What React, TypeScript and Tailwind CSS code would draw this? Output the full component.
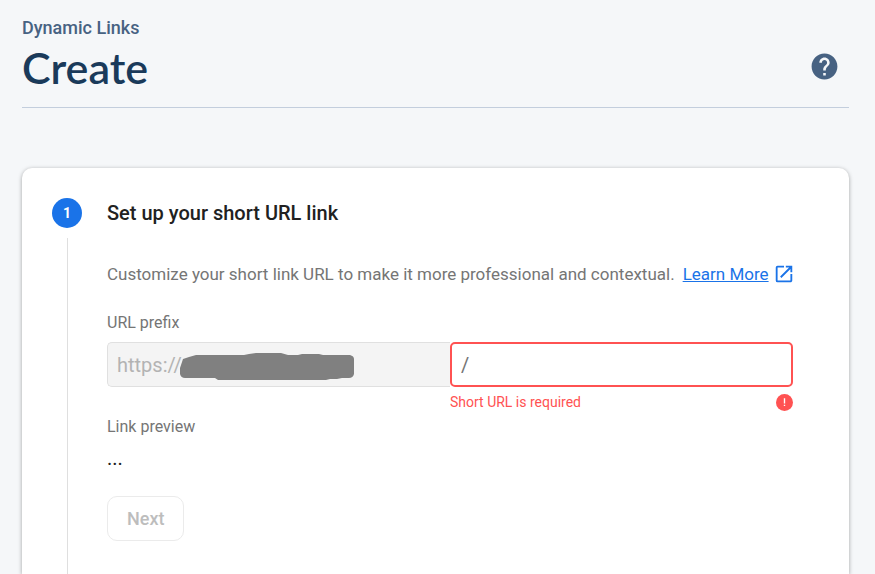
import { useState } from "react"

const HelpIcon = () => {
    return <svg className="w-[31px] h-[31px]" viewBox="0 0 24 24" fill="currentColor" aria-hidden="true">
        <path d="M12 2C6.48 2 2 6.48 2 12s4.48 10 10 10 10-4.480 10-10S17.520 2 12 2zm1 17h-2v-2h2v2zm2.070-7.750l-.9.920C13.450 12.900 13 13.500 13 15h-2v-.5c0-1.100.450-2.100 1.170-2.830l1.240-1.260c.370-.360.590-.860.590-1.410 0-1.100-.9-2-2-2s-2 .9-2 2H8c0-2.210 1.790-4 4-4s4 1.790 4 4c0 .880-.360 1.680-.930 2.250z" />
    </svg>
}

const OpenIcon = () => {
    return <svg className="w-[22px] h-[22px]" viewBox="0 0 24 24" fill="currentColor" aria-hidden="true">
        <path d="M19 19H5V5h7V3H5a2 2 0 0 0-2 2v14a2 2 0 0 0 2 2h14c1.100 0 2-.9 2-2v-7h-2v7zM14 3v2h3.590l-9.830 9.830 1.410 1.410L19 6.410V10h2V3h-7z" />
    </svg>
}

const ErrorIcon = () => {
    return <svg className="w-[17px] h-[17px]" viewBox="2 2 20 20" aria-hidden="true">
        <circle cx="12" cy="12" r="10" fill="#ff5252" />
        <path d="M11.200 7h1.600v6.300h-1.600zM11.200 14.600h1.600v1.600h-1.600z" fill="#fff" />
    </svg>
}

const Scribble = () => {
    return <svg className="absolute left-[73px] top-[11px] w-[175px] h-[29px] pointer-events-none" viewBox="0 0 175 29" aria-hidden="true">
        <path d="M3 6L9 4L16 2H64L69 1L76 0H101L108 2H118L122 1H139L143 2H170Q174 3 174 6V21Q173 25 169 25H162L157 26H150L146 27H38L35 25H5Q1 25 0 21V15Z" fill="#808080" />
    </svg>
}

const Header = () => {
    return <header className="flex items-center border-b border-[#c3cedd] pt-4 pb-4 pr-[9px]">
        <div>
            <p className="text-lg leading-6 font-medium text-[#476282]">Dynamic Links</p>
            <h1 className="mt-1 font-[Lato,sans-serif] font-semibold text-[43px] leading-[47px] text-[#1a3a5a]">Create</h1>
        </div>
        <button type="button" aria-label="Help" className="ml-auto mt-[26px] text-[#476282]">
            <HelpIcon />
        </button>
    </header>
}

export default function App() {
    const [path, setPath] = useState("/")

    return <div className="min-h-screen flex flex-col bg-[#f5f7f9] pl-[22px] pr-[26px] font-[Roboto,sans-serif]">
        <Header />
        <main className="grow flex mt-[60px] pt-[30px] px-[30px] bg-white rounded-t-[10px] shadow-[0_1px_4px_rgba(0,0,0,0.35)]">
            <div className="flex flex-col items-center w-[30px] shrink-0">
                <span className="flex items-center justify-center w-[30px] h-[30px] rounded-full bg-[#1a73e8] text-white text-sm font-bold">1</span>
                <span className="grow w-px mt-[10px] bg-[#dfdfdf]"></span>
            </div>
            <section className="grow pl-[25px]">
                <h2 className="text-xl leading-[30px] font-medium text-[#212121]">Set up your short URL link</h2>
                <div className="flex items-center gap-2 mt-8 text-[17px] leading-7 text-[#757575]">
                    <p>Customize your short link URL to make it more professional and contextual.</p>
                    <a href="#" className="flex items-center gap-1 whitespace-nowrap text-[#1a73e8]">
                        <span className="underline">Learn More</span>
                        <OpenIcon />
                    </a>
                </div>

                <div className="mr-[26px] mt-[23px]">
                    <label htmlFor="prefix" className="block text-base leading-6 text-[#757575]">URL prefix</label>
                    <div className="flex mt-[7px]">
                        <div className="relative w-1/2">
                            <input id="prefix" disabled value="https://" className="block w-full h-[45px] px-[9px] rounded-l-[5px] border border-r-0 border-[#e0e0e0] bg-[#f4f4f4] text-xl text-[#b3b3b3]" />
                            <Scribble />
                        </div>
                        <input aria-label="Short URL" aria-invalid="true" value={path} onChange={(e) => setPath(e.target.value)} className="w-1/2 h-[45px] px-[9px] rounded-[5px] border-2 border-[#ff5252] text-xl text-[#757575] outline-none" />
                    </div>
                    <div className="flex items-center justify-between w-1/2 ml-auto mt-[3px] text-sm leading-6 text-[#ff5252]">
                        <span>Short URL is required</span>
                        <ErrorIcon />
                    </div>
                </div>

                <h3 className="mt-px text-base leading-6 text-[#757575]">Link preview</h3>
                <p className="mt-[7px] text-xl leading-6 text-[#212121]">...</p>
                <button type="button" disabled className="mt-[26px] h-[45px] px-[19px] rounded-[10px] border border-[#ebebeb] text-lg font-medium text-[#bdbdbd]">Next</button>
            </section>
        </main>
    </div>
}
